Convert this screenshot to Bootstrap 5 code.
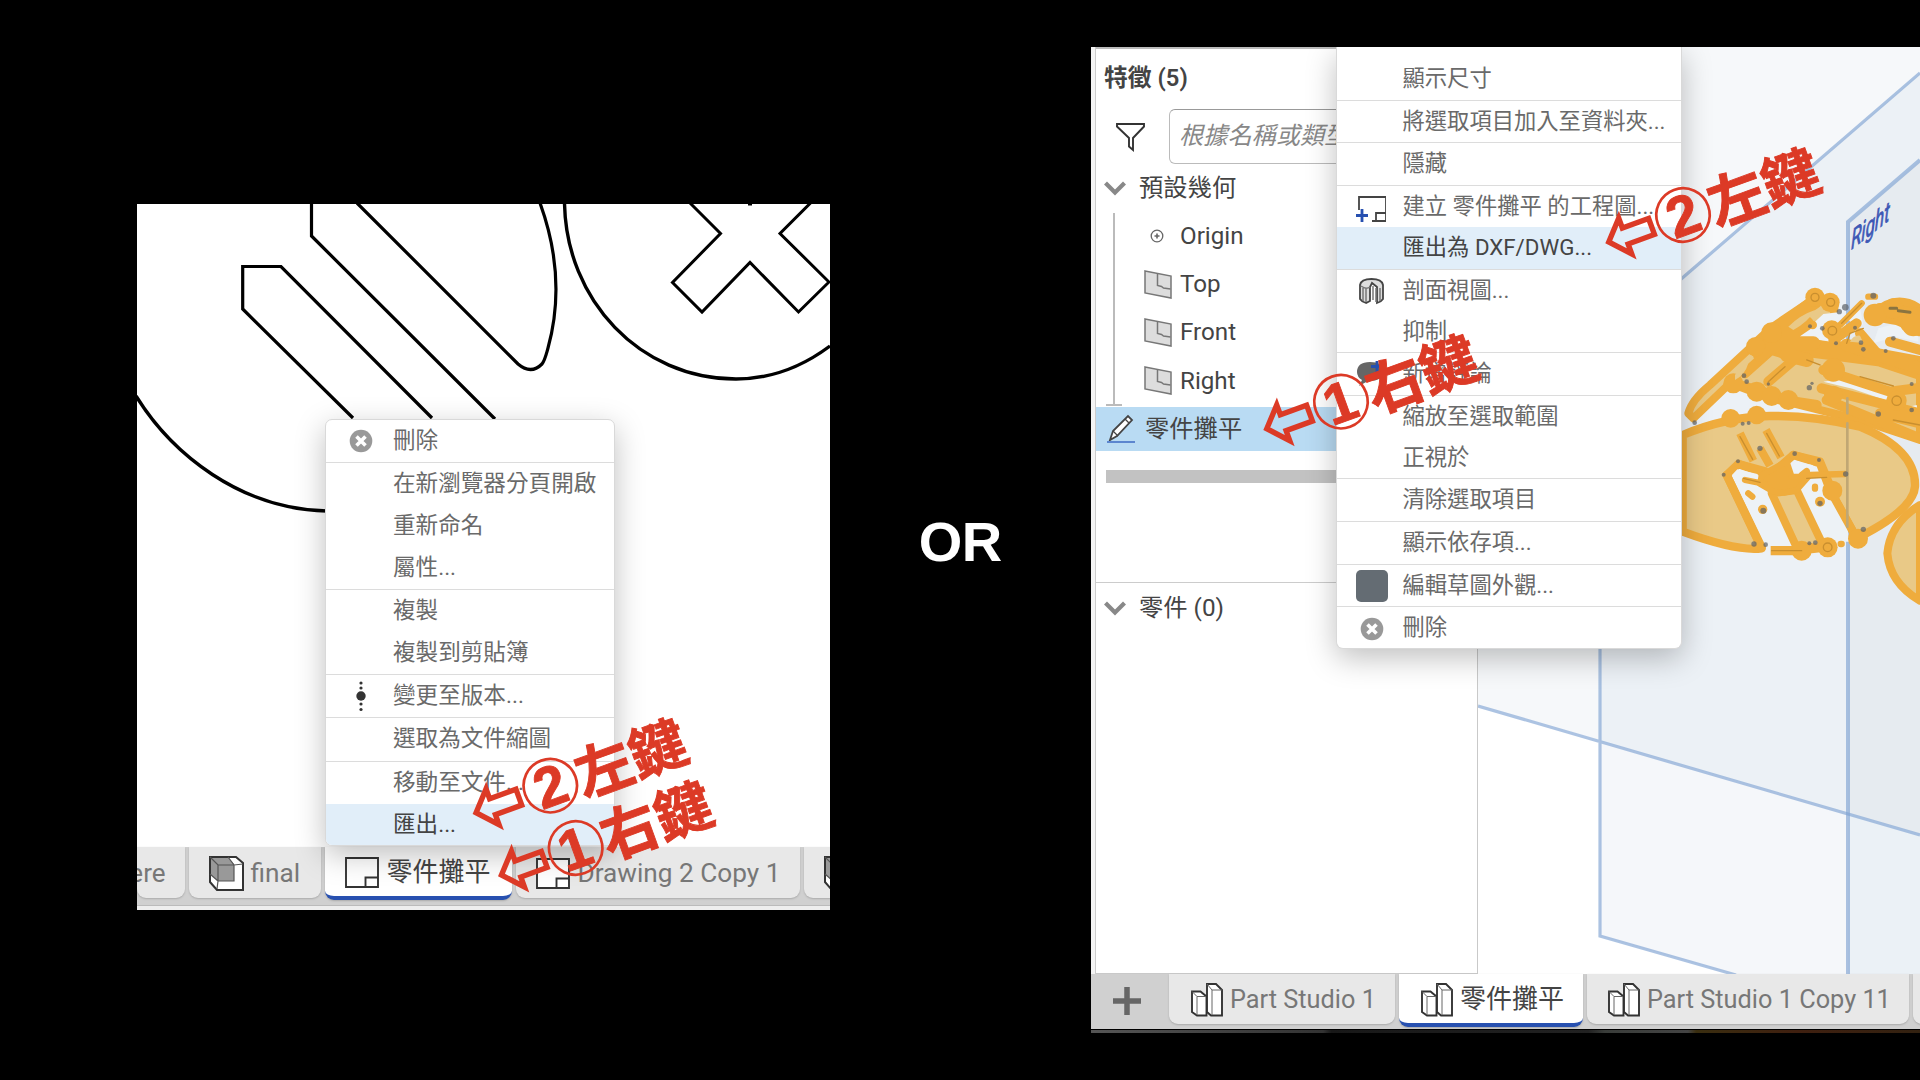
<!DOCTYPE html>
<html lang="zh-Hant">
<head>
<meta charset="utf-8">
<title>匯出 DXF</title>
<link href="https://cdn.jsdelivr.net/npm/bootstrap@5.3.0/dist/css/bootstrap.min.css" rel="stylesheet">
<style>
body{width:1920px;height:1080px;background:#000;font-family:Roboto,"Noto Sans CJK TC",sans-serif;color:#444}
.stage{width:1920px;height:1080px}
.doc-left{width:692.5px;height:706px;margin:204px 0 0 137px;background:#fff}
.doc-right{width:829px;height:982px;margin-top:47px;background:#fff}
.or-label{font:bold 56px/1 "Liberation Sans",sans-serif;color:#fff;padding-top:514px;letter-spacing:-.5px}
.ctx{z-index:3;border:1.5px solid #d9d9d9;background:#fff;box-shadow:0 9px 30px rgba(0,0,0,.25);font-size:22.6px;color:#6a6a6a}
.ctx-l{left:188px;top:214.5px;width:289.5px;height:427px;border-radius:7px}
.ctx-r{left:245px;top:0;width:345.5px;height:602px;border-radius:0 0 7px 7px;border-top:0;padding-top:11px;font-size:22.3px}
.ctx-row{height:41.9px;line-height:41.5px;white-space:nowrap}
.ctx-r .ctx-row{height:41px;line-height:40.6px}
.ctx-row.ruled{border-bottom:1.7px solid #dcdcdc;height:43.3px}
.ctx-r .ctx-row.ruled{height:42.65px}
.ctx-row.hot{background:#e1eef9;color:#444}
.ctx-row.last{border-radius:0 0 6px 6px}
.ctx-l .slot{width:67px;padding-left:3px}
.ctx-r .slot{width:65.5px;padding-left:4px}
.strip{background:#d0d0d0;z-index:1}
.strip-l{height:58px}
.strip-r{height:55px}
.strip>*{flex-shrink:0}
.sheet{background:#e8e8e8;border-radius:0 0 9px 9px;box-shadow:0 1px 2px #aaa;white-space:nowrap;color:#777;font-size:26px;overflow:hidden;padding-top:2px}
.strip-r .lat{font-size:25.3px}
.strip-l .lat{font-size:26.2px}
.strip-l .sheet{height:51px;margin-right:4px}
.strip-r .sheet{height:50px;margin-right:4px}
.sheet.on{background:#fff;color:#444;border-bottom:4px solid #2750b0;height:53px!important}
.foot-l{height:5px;background:#eee;border-top:1.5px solid #bbb}
.edge{width:5px;background:#f4f4f4;border-right:1.5px solid #ccc}
.side{width:382px;border-right:1.5px solid #c9c9c9;border-bottom:1.5px solid #c9c9c9;background:#fff;font-size:24.3px;border-top:2px solid #bbb}
.side-head{height:59.5px;padding-left:8px;font-weight:600;font-size:23.8px;line-height:59px}
.side-filter{height:56px;padding-left:18px}
.field{width:300px;height:55px;border:1.5px solid #bbb;border-top-color:#999;border-radius:6px;font-style:italic;color:#888;padding-left:9px;line-height:53px;white-space:nowrap;font-size:24.2px}
.group-head{height:47.5px;padding-left:8px}
.twig{height:48.2px;padding-left:48px;font-size:24.2px}
.picked{height:44.5px;margin-top:2.2px;background:#b9dbf3;padding-left:10px}
.bar{height:13px;background:#c2c2c2;margin:18.5px 0 0 10px}
.under{left:1091px;top:1030px;width:829px;height:3px;background:linear-gradient(90deg,#555 0,#333 28%,#181818 29%,#222 60%,#3a3d3a 62%,#444 72%,#3a2e10 73%,#402010 85%,#332211 100%)}
.notes{left:0;top:0;z-index:9}
.notes text{stroke:#dc3a26;stroke-width:.9}
svg{display:block;flex:none}
</style>
<script src="https://cdn.jsdelivr.net/npm/bootstrap@5.3.0/dist/js/bootstrap.bundle.min.js"></script>
</head>
<body class="m-0 overflow-hidden">
<svg width="0" height="0" class="position-absolute">
  <symbol id="i-x" viewBox="0 0 24 24"><circle cx="12" cy="12" r="11.3" fill="#999"/><path d="M7.5 7.5l9 9m0-9l-9 9" stroke="#fff" stroke-width="3.6"/></symbol>
  <symbol id="i-sheet" viewBox="0 0 34 31"><path d="M1 1h32v29H1zM20.500 30v-9.500H33" fill="#fff" stroke="#333" stroke-width="1.9"/></symbol>
  <symbol id="i-studio" viewBox="0 0 32 34"><path d="M1 8.500h8.500l6 5V32.500H6L1 29z" fill="#fff" stroke="#333" stroke-width="1.9"/><path d="M16 1h9l6 6V32.500H20L16 29z" fill="#fff" stroke="#333" stroke-width="1.9"/><path d="M1 8.500l5 5h9M6 13.500V32M16 1l5 6h10M21 7v25" fill="none" stroke="#666" stroke-width="1"/></symbol>
  <symbol id="i-cube" viewBox="0 0 35 35"><path d="M1 1h26l7 6v27H8l-7-8z" fill="#fff"/><path d="M1 1h18l6 7v17H9l-8-7z" fill="#999"/><path d="M1 1h26l7 6v27H8l-7-8z" fill="none" stroke="#333" stroke-width="2"/><path d="M1 1l8 8h16l9-1M9 9v16h16V9L19 1M9 25l-1 8M1 18l8 7" fill="none" stroke="#555" stroke-width="1.2"/></symbol>
  <symbol id="i-plane" viewBox="0 0 28 29"><path d="M1 1l26 5v22L1 23z" fill="#ddd" stroke="#777" stroke-width="1.500"/><path d="M13.500 3.500v12l4 1 2 1.500 7 1" fill="none" stroke="#777" stroke-width="1.500"/></symbol>
  <symbol id="i-chev" viewBox="0 0 22 15"><path d="M1.500 2l9.500 9.500L20.500 2" fill="none" stroke="#888" stroke-width="4.200"/></symbol>
</svg>

<main class="stage d-flex align-items-start position-relative">
  <section class="doc-left d-flex flex-column position-relative overflow-hidden flex-shrink-0">
    <svg class="flex-grow-1" width="692.5" viewBox="137 204 692.5 643" fill="none" stroke="#000" stroke-width="3.400" preserveAspectRatio="xMinYMin slice">
      <path d="M311.500 203v33L495 419M357 203l161 161q13 11 24 0c3-4 4-9 6-16 11-40 12-90-8-145M432 418L281 266.500h-38.300V309L353 418" stroke-width="3.200"/>
      <path d="M136 396C172 454 240 509 327 511M564.500 203C566 300 640 379 736 379C772 379 802 367 830 346"/>
      <path d="M690 203l30.500 30.500-48 49 29.500 29.500 48-49.500 48.500 49.500 30.500-30-49-48.500 31-31M748 204h4" stroke-width="3"/>
    </svg>
    <div class="strip strip-l d-flex flex-shrink-0">
      <div class="sheet d-flex align-items-center justify-content-end" style="width:47.500px"><span style="padding-right:19px">ere</span></div>
      <div class="sheet d-flex align-items-center" style="width:132px;padding-left:20px;gap:7px"><svg width="35" height="35"><use href="#i-cube"/></svg><span class="lat">final</span></div>
      <div class="sheet on d-flex align-items-center" style="width:187px;padding-left:20px;gap:8px"><svg width="34" height="31"><use href="#i-sheet"/></svg><span>零件攤平</span></div>
      <div class="sheet d-flex align-items-center" style="width:284px;padding-left:20px;gap:8px"><svg width="34" height="31"><use href="#i-sheet"/></svg><span class="lat">Drawing 2 Copy 1</span></div>
      <div class="sheet d-flex align-items-center me-0" style="width:60px;padding-left:20px"><svg width="35" height="35"><use href="#i-cube"/></svg></div>
    </div>
    <div class="foot-l flex-shrink-0"></div>
    <div class="ctx ctx-l position-absolute">
      <div class="ctx-row ruled d-flex"><span class="slot d-flex align-items-center justify-content-center"><svg width="24" height="24"><use href="#i-x"/></svg></span>刪除</div>
      <div class="ctx-row d-flex"><span class="slot"></span>在新瀏覽器分頁開啟</div>
      <div class="ctx-row d-flex"><span class="slot"></span>重新命名</div>
      <div class="ctx-row ruled d-flex"><span class="slot"></span>屬性...</div>
      <div class="ctx-row d-flex"><span class="slot"></span>複製</div>
      <div class="ctx-row ruled d-flex"><span class="slot"></span>複製到剪貼簿</div>
      <div class="ctx-row ruled d-flex"><span class="slot d-flex align-items-center justify-content-center"><svg width="12" height="32" fill="#333"><circle cx="6" cy="16" r="4.700"/><circle cx="6" cy="3" r="1.600"/><circle cx="6" cy="8" r="1.600"/><circle cx="6" cy="24" r="1.600"/><circle cx="6" cy="29.500" r="1.600"/></svg></span>變更至版本...</div>
      <div class="ctx-row ruled d-flex"><span class="slot"></span>選取為文件縮圖</div>
      <div class="ctx-row d-flex"><span class="slot"></span>移動至文件...</div>
      <div class="ctx-row hot last d-flex"><span class="slot"></span>匯出...</div>
    </div>
  </section>

  <div class="or-label flex-grow-1 text-center">OR</div>

  <section class="doc-right d-flex flex-column position-relative overflow-hidden flex-shrink-0">
    <div class="d-flex flex-grow-1">
      <div class="edge"></div>
      <div class="side d-flex flex-column flex-shrink-0">
        <div class="side-head">特徵 (5)</div>
        <div class="side-filter d-flex align-items-center"><svg width="36" height="32" viewBox="0 0 36 32" fill="none" stroke="#333" stroke-width="1.900"><path d="M3 3h27v2.500L19 17v12l-4-3.500V17L3 5.500z"/></svg><div class="field flex-shrink-0" style="margin-left:19px">根據名稱或類型</div></div>
        <div class="group-head d-flex align-items-center"><svg width="22" height="15" style="margin-right:13px"><use href="#i-chev"/></svg>預設幾何</div>
        <div class="position-relative">
          <svg class="position-absolute" style="left:9px;top:0" width="20" height="197" fill="none" stroke="#bbb" stroke-width="2"><path d="M9 1v192M1 193h16"/></svg>
          <div class="twig d-flex align-items-center"><svg width="14" height="14" viewBox="0 0 14 14" style="margin:0 16px 0 6px"><circle cx="7" cy="7" r="5.800" fill="none" stroke="#666" stroke-width="1.300"/><path d="M4.500 7h5M7 4.500v5" stroke="#666" stroke-width="1.600"/></svg>Origin</div>
          <div class="twig d-flex align-items-center"><svg width="28" height="29" style="margin-right:8px"><use href="#i-plane"/></svg>Top</div>
          <div class="twig d-flex align-items-center"><svg width="28" height="29" style="margin-right:8px"><use href="#i-plane"/></svg>Front</div>
          <div class="twig d-flex align-items-center"><svg width="28" height="29" style="margin-right:8px"><use href="#i-plane"/></svg>Right</div>
        </div>
        <div class="picked d-flex align-items-center"><svg width="30" height="30" viewBox="0 0 30 30" style="margin-right:9px"><path d="M4 26l3-9L22 2l4 4-15 16z" fill="#fff" stroke="#444" stroke-width="1.800"/><path d="M7 17l5 5M19 5l4 4" stroke="#444" stroke-width="1.300"/><path d="M1 28h28" stroke="#5c86cf" stroke-width="2"/></svg>零件攤平</div>
        <div class="bar"></div>
        <div class="group-head d-flex align-items-center" style="margin-top:99px;border-top:1.500px solid #ccc;height:52px"><svg width="22" height="15" style="margin-right:13px"><use href="#i-chev"/></svg>零件 (0)</div>
      </div>
      <svg width="442" height="927" viewBox="1478 47 442 927">
        <rect x="1478" y="47" width="442" height="927" fill="#f6f8fa"/>
        <path d="M1600 346L1682 279 1920 73V974H1600z" fill="#ecf1f6"/>
        <path d="M1848 222l72-62v680l-72-27z" fill="#e6ebf0"/>
        <path d="M1478 705l122 35v234h-122z" fill="#fff"/>
        <path d="M1600 741l248 72v161H1733l-133-38z" fill="#f5f7fa"/>
        <path d="M1600 936l133 38h-133z" fill="#fff"/>
        <path d="M1848 813l72 21v140h-72z" fill="#ebf1f6"/>
        <g fill="none" stroke="#7fa3d2" stroke-opacity=".65" stroke-width="3.200"><path d="M1478 706l442 129M1600 640v296l136 39M1680 280L1920 73"/><path d="M1848 974V222l72-62" stroke-width="4"/></g>
        <text transform="matrix(.72 -.56 -.03 1.15 1851 250)" font-size="24" fill="#3d58b5" stroke="#3d58b5" stroke-width=".7" font-style="italic">Right</text>
        <g transform="translate(1660 260) scale(.33333)" stroke-linejoin="round" stroke-linecap="round">
          <path d="M100 475L85 460Q95 420 150 375L280 255 330 215 465 112 525 125 520 180 430 235 780 300V540L600 480 400 430 330 400 215 365z" fill="#e9c987" stroke="#efac3d" stroke-width="24"/>
          <path d="M68 525Q200 470 330 468T600 500Q770 570 765 680Q760 750 590 835L510 690 480 610 400 585 330 645 235 612 200 645 305 865Q230 875 68 815z" fill="#e9c987" stroke="#efac3d" stroke-width="25"/>
          <path d="M780 735Q690 790 682 880Q690 970 780 1022z" fill="#e9c987" stroke="#efac3d" stroke-width="24"/>
          <path d="M415 232l75-70 45-5 10 45-20 45zM640 250l15-45 60-15 60 40v15l-70-15zM490 365l45-8 150 48-8 16-100-35zM700 450l70-15 10 60-90-22zM560 180l40-35 10 50z" fill="#edf2f6"/>
          <path d="M216 645l16-17 60 14 40 60 80 160h-94zM388 625l22-20 47 10 23 30-65 4zM420 690l25-25 50 20 65 100 8 60h-70z" fill="#edf2f6"/>
          <path d="M335 700L410 862h82L410 690z" fill="#e9c987" stroke="#efac3d" stroke-width="24"/>
          <path d="M200 645L305 862M235 612l80 22M400 585l80 20 25 60" fill="none" stroke="#efac3d" stroke-width="25"/>
          <path d="M305 645L380 605 395 650 445 650 410 690 375 698 340 695 300 672z" fill="#efac3d" stroke="#efac3d" stroke-width="18"/>
          <g fill="none" stroke="#efac3d" stroke-width="30">
            <path d="M285 255L400 290M255 340l95-85 130 25M220 370l120 45 130 20M325 365l105-90 230 30 120 40M470 255l130 25 180 60M490 330l200 65 80-10M485 385l295 75M660 460l120 30M520 240l70-50M640 165q70-65 140-15M650 170l60 10 70 30M690 245l90 25M500 420l280 115M600 220l60 70"/>
            <path d="M280 265L340 210 465 125M300 285L440 190M340 250h120M380 285l60 15M660 150l120 15" stroke-width="42"/>
            <path d="M415 872l85-10M510 690l80 145" stroke-width="25"/>
            <path d="M700 150l80 20M740 195l40 15M560 255l220 70" stroke-width="38"/>
            <path d="M240 520l40 82M318 510l45 82M300 565l30 52" stroke-width="24" stroke-linecap="butt"/>
            <path d="M332 872h110" stroke-width="28" stroke-linecap="butt"/>
            <path d="M255 660l60 12M450 645l105-3M265 700l12 10M540 195l65-65M465 680v6M625 110h20M425 645l15-12M542 852h3" stroke-width="19"/>
          </g>
          <g fill="#efac3d"><circle cx="465" cy="112" r="29"/><circle cx="510" cy="127" r="29"/><circle cx="335" cy="218" r="31"/><circle cx="287" cy="260" r="29"/><circle cx="515" cy="210" r="29"/><circle cx="520" cy="330" r="35"/><circle cx="520" cy="405" r="28"/><circle cx="710" cy="422" r="30"/><circle cx="220" cy="370" r="30"/><circle cx="290" cy="395" r="30"/><circle cx="335" cy="408" r="30"/><circle cx="385" cy="420" r="30"/><circle cx="212" cy="475" r="28"/><circle cx="290" cy="465" r="28"/><circle cx="517" cy="692" r="30"/><circle cx="594" cy="836" r="30"/><circle cx="425" cy="872" r="30"/><circle cx="503" cy="862" r="30"/><circle cx="308" cy="748" r="14"/><circle cx="480" cy="725" r="15"/><circle cx="645" cy="165" r="34"/><circle cx="760" cy="195" r="34"/><circle cx="700" cy="145" r="30"/><circle cx="458" cy="195" r="13"/></g>
          <g fill="none" stroke="#c98f2f" stroke-width="4"><circle cx="465" cy="112" r="12"/><circle cx="512" cy="127" r="12"/><circle cx="517" cy="212" r="13"/><circle cx="710" cy="422" r="14"/><circle cx="503" cy="862" r="13"/><path d="M600 350l100 28M325 365l50-45M440 300l40 15M250 655l50 12M335 872h90M240 530l38 68M320 520l38 68M440 655l60-3M700 480l80 15M545 190l60-60M560 250l10-30 40-15"/></g>
          <path d="M385 200q35-35 80-50-20 35-65 60zM225 345q15-25 40-35-10 35-40 50zM570 245q10-20 30-18l10 22z" fill="#e9c987"/>
          <path d="M562 415v45M562 490v310" stroke="#c0a774" stroke-width="8"/>
          <g fill="#5d6166" fill-opacity=".7"><circle cx="640" cy="107" r="9"/><circle cx="556" cy="142" r="10"/><circle cx="538" cy="155" r="8"/><circle cx="487" cy="205" r="7"/><circle cx="450" cy="199" r="6"/><circle cx="603" cy="248" r="7"/><circle cx="610" cy="268" r="7"/><circle cx="528" cy="250" r="6"/><circle cx="585" cy="203" r="6"/><circle cx="700" cy="235" r="7"/><circle cx="677" cy="273" r="6"/><circle cx="252" cy="347" r="7"/><circle cx="260" cy="365" r="7"/><circle cx="325" cy="372" r="5"/><circle cx="448" cy="383" r="8"/><circle cx="456" cy="370" r="5"/><circle cx="755" cy="372" r="6"/><circle cx="655" cy="462" r="8"/><circle cx="755" cy="450" r="7"/><circle cx="104" cy="488" r="7"/><circle cx="248" cy="491" r="6"/><circle cx="266" cy="489" r="6"/><circle cx="300" cy="565" r="8"/><circle cx="404" cy="581" r="7"/><circle cx="477" cy="600" r="6"/><circle cx="234" cy="604" r="6"/><circle cx="191" cy="644" r="6"/><circle cx="557" cy="642" r="8"/><circle cx="310" cy="752" r="9"/><circle cx="480" cy="730" r="8"/><circle cx="282" cy="852" r="8"/><circle cx="317" cy="854" r="7"/><circle cx="448" cy="850" r="6"/><circle cx="466" cy="848" r="7"/><circle cx="610" cy="808" r="8"/></g>
          <path d="M690 145h20M715 152l35 5" stroke="#8a7440" stroke-width="9"/>
        </g>
      </svg>
    </div>
    <div class="strip strip-r d-flex flex-shrink-0">
      <div class="d-flex align-items-center justify-content-center" style="width:74px;margin-right:4px"><svg width="28" height="28" style="margin-top:-1px;margin-left:-3px"><path d="M14 0v28M0 14h28" stroke="#666" stroke-width="5.500"/></svg></div>
      <div class="sheet d-flex align-items-center" style="width:226px;padding-left:22px;gap:7px"><svg width="32" height="34"><use href="#i-studio"/></svg><span class="lat">Part Studio 1</span></div>
      <div class="sheet on d-flex align-items-center" style="width:184px;padding-left:22px;gap:7px"><svg width="32" height="34"><use href="#i-studio"/></svg><span>零件攤平</span></div>
      <div class="sheet d-flex align-items-center" style="width:322px;padding-left:21px;gap:7px"><svg width="32" height="34"><use href="#i-studio"/></svg><span class="lat">Part Studio 1 Copy 11</span></div>
      <div class="sheet me-0" style="width:40px"></div>
    </div>
    <div class="ctx ctx-r position-absolute">
      <div class="ctx-row ruled d-flex"><span class="slot"></span>顯示尺寸</div>
      <div class="ctx-row ruled d-flex"><span class="slot"></span>將選取項目加入至資料夾...</div>
      <div class="ctx-row ruled d-flex"><span class="slot"></span>隱藏</div>
      <div class="ctx-row d-flex"><span class="slot"><svg class="mt-2 ms-2 ps-1" width="37" height="30" viewBox="-4 0 33 28"><path d="M2 15V2h27v24H15M19 25v-7h10" fill="none" stroke="#444" stroke-width="1.800"/><path d="M5 14v13M-1 20.500h12" stroke="#2750b0" stroke-width="2.800"/></svg></span>建立 零件攤平 的工程圖...</div>
      <div class="ctx-row ruled hot d-flex"><span class="slot"></span>匯出為 DXF/DWG...</div>
      <div class="ctx-row d-flex"><span class="slot d-flex align-items-center justify-content-center"><svg width="25" height="27" viewBox="0 0 25 27" style="margin-top:3px"><path d="M1 7Q2 1 12.500 1T24 7v14q-2 3-6 4V9l-5-4-2 4v14l-4 2q-4-1-6-4z" fill="#ddd" stroke="#444" stroke-width="1.800"/><path d="M4 10v13M7 10v14M14 8v14M17 10v14M21 10v13M2 8q5 4 9 1" stroke="#777" stroke-width="1.500" fill="none"/></svg></span>剖面視圖...</div>
      <div class="ctx-row ruled d-flex"><span class="slot"></span>抑制</div>
      <div class="ctx-row ruled d-flex"><span class="slot"><svg style="margin:6px 0 0 14px" width="32" height="30"><path d="M2 13Q2 3 15 3t14 9q0 10-16 10l-9 5 3-6Q2 18 2 13z" fill="#666"/><path d="M22 2v11M16 7.500h12" stroke="#2750b0" stroke-width="2.800"/></svg></span>新增評論</div>
      <div class="ctx-row d-flex"><span class="slot"></span>縮放至選取範圍</div>
      <div class="ctx-row ruled d-flex"><span class="slot"></span>正視於</div>
      <div class="ctx-row ruled d-flex"><span class="slot"></span>清除選取項目</div>
      <div class="ctx-row ruled d-flex"><span class="slot"></span>顯示依存項...</div>
      <div class="ctx-row ruled d-flex"><span class="slot d-flex align-items-center justify-content-center"><svg width="32" height="32"><rect width="32" height="32" rx="5" fill="#646c73"/></svg></span>編輯草圖外觀...</div>
      <div class="ctx-row d-flex"><span class="slot d-flex align-items-center justify-content-center"><svg width="24" height="24" style="margin-top:3px"><use href="#i-x"/></svg></span>刪除</div>
    </div>
  </section>

  <div class="under position-absolute"></div>

  <!-- numbered click hints laid over both windows -->
  <svg class="notes position-absolute" width="1920" height="1080" fill="#dc3a26" font-weight="bold">
    <defs><g id="hint"><path d="M-79 0L-61.500-19V-8.500H-33.500V8.500H-61.500V19z" fill="none" stroke="#dc3a26" stroke-width="5.400"/><circle r="26.700" fill="none" stroke="#dc3a26" stroke-width="2.700"/></g></defs>
    <g transform="translate(550.300 785.700) rotate(-20)"><use href="#hint"/><text y="20" text-anchor="middle" font-size="57" font-family="Liberation Sans, sans-serif">2</text><text x="27.500" y="23" font-size="57.500" font-family="Noto Sans CJK TC, sans-serif">左鍵</text></g>
    <g transform="translate(575.700 848) rotate(-20)"><use href="#hint"/><text y="20" x="-1" text-anchor="middle" font-size="57" font-family="Liberation Sans, sans-serif">1</text><text x="27.500" y="23" font-size="57.500" font-family="Noto Sans CJK TC, sans-serif">右鍵</text></g>
    <g transform="translate(1341 401.700) rotate(-20)"><use href="#hint"/><text y="20" x="-1" text-anchor="middle" font-size="57" font-family="Liberation Sans, sans-serif">1</text><text x="27.500" y="23" font-size="57.500" font-family="Noto Sans CJK TC, sans-serif">右鍵</text></g>
    <g transform="translate(1683 215) rotate(-20)"><use href="#hint"/><text y="20" text-anchor="middle" font-size="57" font-family="Liberation Sans, sans-serif">2</text><text x="27.500" y="23" font-size="57.500" font-family="Noto Sans CJK TC, sans-serif">左鍵</text></g>
  </svg>
</main>
</body>
</html>
